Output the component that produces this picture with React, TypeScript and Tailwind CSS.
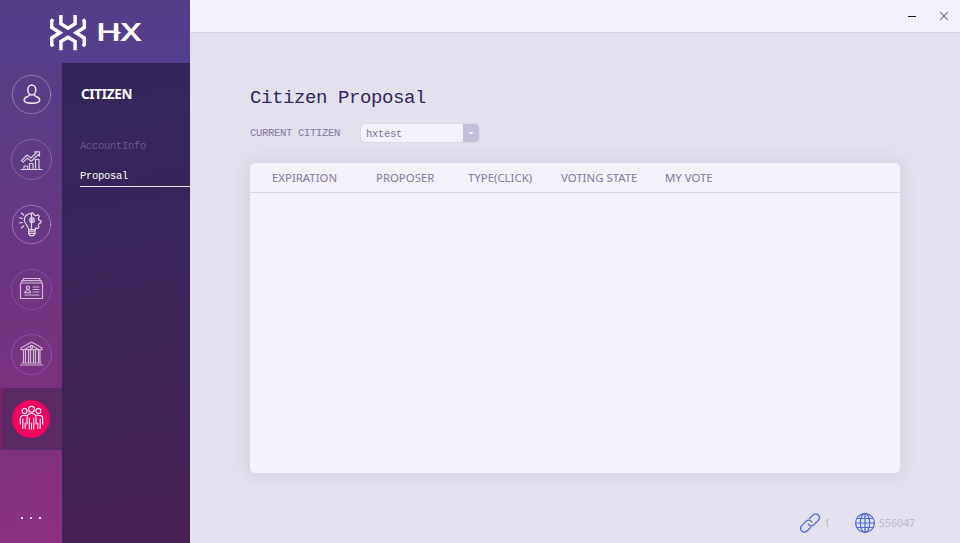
import React from "react";

const mono = "font-['Liberation_Mono',monospace]";
const sans = "font-['Noto_Sans','Open_Sans',sans-serif]";

function Logo() {
  return (
    <div className="flex h-[63px] w-[190px] shrink-0 items-center bg-gradient-to-b from-[#543c88] to-[#54408f] pl-[50px]">
      <svg width="37" height="36" viewBox="0 0 37 36" className="mt-[2px] shrink-0" fill="none" stroke="#fff" strokeWidth="3.5">
        <path d="M10.900 0V8.800L18 13.200l7.100-4.400V0" />
        <path d="M10.900 35.200V26.600L18 22.300l7.100 4.300v8.600" />
        <path d="M3 4.300L1.700 6v6.500l8.300 5.200-8.300 5.300v6.500l1.300 1.700" />
        <path d="M33 4.300L34.300 6v6.500l-8.300 5.200 8.300 5.300v6.500l-1.300 1.700" />
      </svg>
      <svg width="48" height="24" viewBox="0 0 48 24" className="ml-[11px] mt-[2px] shrink-0 overflow-visible" fill="#fff">
        <text x="-1.500" y="20.300" textLength="24" lengthAdjust="spacingAndGlyphs" className="font-['Inter',sans-serif] text-[24px] font-semibold">H</text>
        <text x="21.500" y="20.300" textLength="23" lengthAdjust="spacingAndGlyphs" className="font-['Inter',sans-serif] text-[24px] font-semibold">X</text>
        <path d="M19 9.800l4.500 1.900-4.500 1.900z" />
      </svg>
    </div>
  );
}

const icons = [
  <g key="user" strokeWidth="1.500">
    <ellipse cx="20.800" cy="16" rx="4" ry="5" />
    <path d="M18.600 20.200c0 2-1.600 2.100-3.100 2.800-1.800.9-2.500 1.900-2.300 3.300.3 2 3.700 2.900 7.700 2.900s7.400-.9 7.700-2.900c.2-1.400-.5-2.400-2.300-3.300-1.500-.7-3.100-.8-3.100-2.800" />
  </g>,
  <g key="chart" strokeWidth="1.200">
    <path d="M10 30.500h21M13 30v-3h3.500v3M18.500 30v-5.500H22V30M24.500 30v-9.500H28V30" />
    <path d="M10.500 21.500l5.500-5.500 4 3 5-5-1.200-1.200h4.700V17l-1.400-1.300-6.700 6.500-4.200-3-3.900 3.900z" />
  </g>,
  <g key="idea" strokeWidth="1.200">
    <path d="M20.500 9.300c-4.800.2-7.500 3.400-7.200 7 .3 3.800 4 5.200 4.400 9.200h6.500" />
    <path d="M20.500 9v10m0-10l1.900.2.700 1.800 1.700.7 2-1 1.500 1.700-1 2 .7 1.700 2 .7v2l-2 .8-.7 1.800.7 1.700-1.500 1.500-1.700-.7-.5 1.300" />
    <circle cx="21" cy="16.200" r="2.300" />
    <circle cx="21" cy="16.200" r=".6" />
    <path d="M20.500 18.500v7M17.500 27.200h6.700M17.600 29.300h6.500M19 31.700h3.500M17.600 25.500v4l1.400 2.200M24.100 25.500v4l-1.500 2.200M12.500 11l-2-2M11.300 14.500l-2.500-.8M11.300 18.500l-2.800.5M12.700 22l-2.500 2" />
  </g>,
  <g key="card" strokeWidth="1.200" transform="translate(0 .5)">
    <path d="M9.500 13.500h22v15.500h-22zM10.800 13.500v-2.300h19.500v2.300M12.300 11.200V9h16.500v2.200" />
    <path d="M14 22.500l1.500-2h2.600l1.400 2M13.500 23.200h6M22 17.500h6M22 20h6M22 22.500h6M14 25.500h14" />
    <circle cx="16.800" cy="18.300" r="1.600" />
  </g>,
  <g key="bank" strokeWidth="1.200" transform="translate(0 .5)">
    <path d="M10 13.500L20.500 7.500 31 13.500v1.700H10zM13.500 15l7-4.200 7 4.200M11 28.500h19M9.500 30.500h22" />
    <path d="M12.500 16v12M14.500 16v12M17.500 16v12M19.500 16v12M22.500 16v12M24.500 16v12M27.500 16v12M29 16v12" />
    <circle cx="20.500" cy="12.500" r="1.300" />
  </g>,
  <g key="people" strokeWidth="1.100">
    <circle cx="20.500" cy="10.300" r="2.900" />
    <circle cx="13.600" cy="12" r="2.500" />
    <circle cx="27.400" cy="12" r="2.500" />
    <path d="M16 25v-6.500c0-2.600 1.500-4 4.500-4s4.500 1.400 4.500 4V25M18.300 19v11M22.700 19v11M20.500 24v6" />
    <path d="M15.300 16.300c-4-.4-6 .7-6 3.200v5.500M11.800 20v9.500M14.200 24v5.500M25.700 16.300c4-.4 6 .7 6 3.200v5.500M29.200 20v9.500M26.800 24v5.500" />
  </g>,
];

const strengths = ["opacity-90", "opacity-75", "opacity-80", "opacity-65", "opacity-65", "opacity-100"];
const rings = [
  "stroke-[#fff]/30",
  "stroke-[#fff]/20",
  "stroke-[#fff]/30",
  "stroke-[#c090ff]/25",
  "stroke-[#c090ff]/30",
  "stroke-transparent",
];

function IconRail() {
  return (
    <nav className="flex w-[62px] shrink-0 flex-col bg-[linear-gradient(170deg,#573e87_0%,#603a86_25%,#713480_50%,#7d327f_75%,#8c317f_100%)]">
      {icons.map((icon, i) => (
        <div
          key={i}
          className={`flex shrink-0 justify-center ${i === 5 ? "h-[62px] bg-[linear-gradient(90deg,#8a1f64_0,#5a2a67_3px)] pt-[10px]" : "h-[65px] pt-[11px]"}`}
        >
          <svg width="41" height="41" viewBox="0 0 41 41" fill="none" stroke="#fff" strokeLinecap="round" strokeLinejoin="round">
            <circle
              cx={i === 5 ? 20 : 20.5}
              cy={i === 5 ? 21 : 20.5}
              r={i === 0 || i === 2 ? 19.2 : i === 5 ? 19 : 20}
              className={`${rings[i]} ${i === 5 ? "fill-[#f0045f]" : ""}`}
            />
            <g className={strengths[i]} transform={i === 5 ? "translate(0 1)" : undefined}>{icon}</g>
          </svg>
        </div>
      ))}
      <div className="mt-[67px] flex gap-[7px] pl-[21px]">
        <i className="size-[2px] bg-[#f2e6f2]" />
        <i className="size-[2px] bg-[#f2e6f2]" />
        <i className="size-[2px] bg-[#f2e6f2]" />
      </div>
    </nav>
  );
}

function SubMenu() {
  return (
    <aside className="w-[128px] shrink-0 bg-[linear-gradient(170deg,#33265b_0%,#38255a_35%,#402356_75%,#482152_100%)]">
      <h2 className={`${sans} ml-[19px] mt-[21px] text-[13.5px] font-bold leading-5 tracking-[-0.3px] text-white`}>CITIZEN</h2>
      <div className={`${mono} ml-[18px] text-[10.5px] tracking-[-0.3px]`}>
        <div className="mt-[35px] h-[14px] leading-[14px] text-[#6c5a8a]">AccountInfo</div>
        <div className="mt-[16px] h-[18px] border-b border-[#e8e4ef] leading-[14px] text-white">Proposal</div>
      </div>
    </aside>
  );
}

const columns = [
  { label: "EXPIRATION", width: "w-[104px]" },
  { label: "PROPOSER", width: "w-[92px]" },
  { label: "TYPE(CLICK)", width: "w-[93px]" },
  { label: "VOTING STATE", width: "w-[104px]" },
  { label: "MY VOTE", width: "w-[100px]" },
];

function Proposals() {
  return (
    <section className="h-[310px] w-[650px] rounded-[5px] bg-[#f3f1fa] shadow-[0_0_16px_3px_rgba(150,140,180,0.2)]">
      <div className={`${sans} flex h-[30px] items-center border-b border-[#dad6e8] pl-[22px] text-[11.4px] leading-[17px] text-[#8378a0]`}>
        {columns.map((c) => (
          <span key={c.label} className={`${c.width} whitespace-nowrap`}>{c.label}</span>
        ))}
      </div>
    </section>
  );
}

function Footer() {
  return (
    <footer className={`${sans} mt-[40px] flex h-5 items-center text-[10.5px] text-[#b9bad0]`}>
      <svg width="20" height="20" viewBox="0 0 20 20" className="ml-[550px] shrink-0" fill="none" stroke="#5068d8" strokeWidth="1.300" strokeLinecap="round">
        <path d="M9.500 5.500l3-3c1.700-1.700 4-2 5.700-.6s1.600 4-.1 5.700l-4.300 4.300c-1.800 1.600-4.500 1.200-5.500-1" />
        <path d="M10.500 14.500l-3 3c-1.700 1.700-4 2-5.700.6s-1.600-4 .1-5.700l4.300-4.300c1.800-1.600 4.500-1.200 5.500 1" />
      </svg>
      <span className="ml-[4px] w-[31px] pt-[2px]">1</span>
      <svg width="20" height="20" viewBox="0 0 20 20" className="shrink-0" fill="none" stroke="#5068d8" strokeWidth="1.200">
        <circle cx="10" cy="10" r="9.400" />
        <ellipse cx="10" cy="10" rx="4.700" ry="9.400" />
        <path d="M10 .6v18.800M.6 10h18.800M2.200 5.500h15.600M2.200 14.500h15.600" />
      </svg>
      <span className="ml-[4px] pt-[2px]">556047</span>
    </footer>
  );
}

export default function App() {
  return (
    <div className="flex h-[543px] w-[960px] overflow-hidden bg-[#e3e1ed]">
      <div className="flex w-[190px] shrink-0 flex-col">
        <Logo />
        <div className="flex min-h-0 flex-1">
          <IconRail />
          <SubMenu />
        </div>
      </div>
      <main className="flex min-w-0 flex-1 flex-col">
        <div className="flex h-[33px] shrink-0 items-center justify-end border-b border-[#d3d0e3] bg-[#f3f1fa] pr-[12px]">
          <i className="h-px w-2 bg-[#201450]" />
          <svg width="8" height="8" viewBox="0 0 8 8" className="ml-[24px]" stroke="#77708f" strokeWidth="1.200">
            <path d="M0 0l8 8M8 0L0 8" />
          </svg>
        </div>
        <div className="pl-[60px]">
          <h1 className={`${mono} mt-[53px] h-6 text-[19px] leading-6 tracking-[-0.4px] text-[#33245e]`}>Citizen Proposal</h1>
          <div className={`${mono} mt-[13px] flex h-5 items-center text-[10.500px] tracking-[-0.3px] text-[#8378a0]`}>
            <span className="w-[110px] pt-px">CURRENT CITIZEN</span>
            <div className="flex h-5 w-[120px] overflow-hidden rounded-[5px] border border-[#dcd8e9] bg-[#f3f1fa]">
              <span className="flex-1 pl-[5px] leading-[20px]">hxtest</span>
              <span className="flex w-[16px] items-center justify-center bg-[#c5bfd9]">
                <svg width="6" height="3" viewBox="0 0 6 3" fill="#f3f1fa"><path d="M0 0h6L3 2.500z" /></svg>
              </span>
            </div>
          </div>
          <div className="mt-[20px]">
            <Proposals />
          </div>
          <Footer />
        </div>
      </main>
    </div>
  );
}
